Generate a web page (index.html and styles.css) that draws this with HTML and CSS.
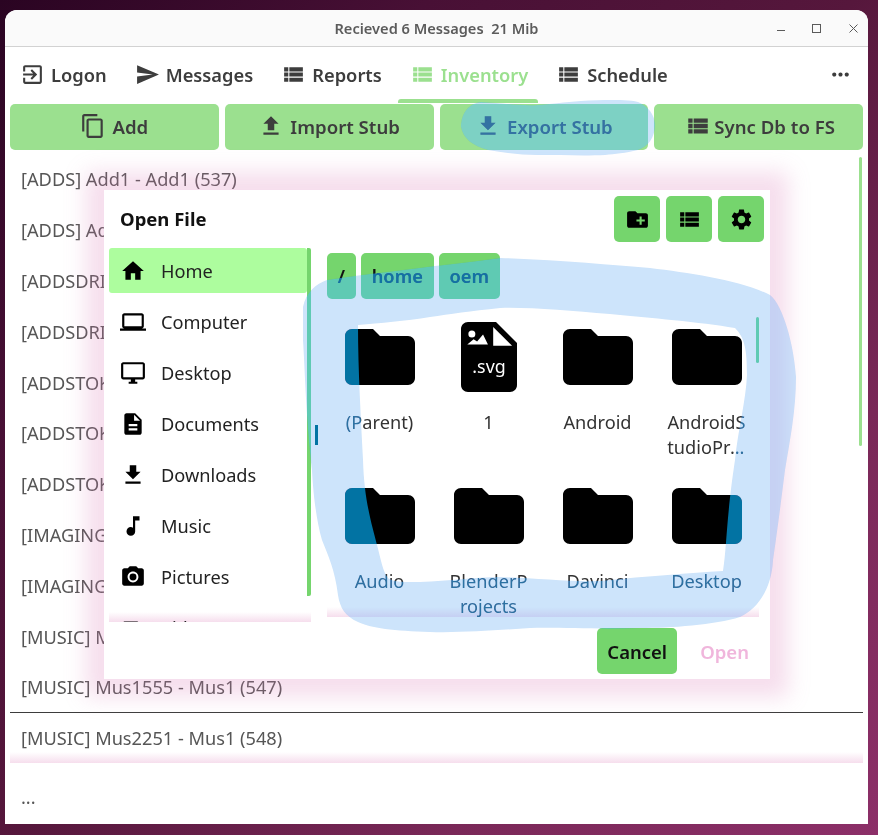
FILE: index.html
```html
<!DOCTYPE html>
<html lang="en">
<head>
    <meta charset="UTF-8">
    <meta name="viewport" content="width=device-width, initial-scale=1.0">
    <title>Recieved 6 Messages 21 Mib</title>
    <link rel="stylesheet" href="styles.css">
</head>
<body>

    <!-- icons used more than once -->
    <svg class="sprite" xmlns="http://www.w3.org/2000/svg">
        <symbol id="i-logon" viewBox="0 0 24 24"><path d="M10.09 15.59L11.5 17l5-5-5-5-1.41 1.41L12.67 11H3v2h9.67l-2.58 2.59zM19 3H5c-1.11 0-2 .9-2 2v4h2V5h14v14H5v-4H3v4c0 1.1.89 2 2 2h14c1.1 0 2-.9 2-2V5c0-1.1-.9-2-2-2z"/></symbol>
        <symbol id="i-send" viewBox="0 0 24 24"><path d="M2.01 21L23 12 2.01 3 2 10l15 2-15 2z"/></symbol>
        <symbol id="i-list" viewBox="0 0 24 24"><path d="M3 14h4v-4H3v4zm0 5h4v-4H3v4zM3 9h4V5H3v4zm5 5h13v-4H8v4zm0 5h13v-4H8v4zM8 5v4h13V5H8z"/></symbol>
        <symbol id="i-more" viewBox="0 0 24 24"><path d="M6 10c-1.1 0-2 .9-2 2s.9 2 2 2 2-.9 2-2-.9-2-2-2zm12 0c-1.1 0-2 .9-2 2s.9 2 2 2 2-.9 2-2-.9-2-2-2zm-6 0c-1.1 0-2 .9-2 2s.9 2 2 2 2-.9 2-2-.9-2-2-2z"/></symbol>
        <symbol id="i-copy" viewBox="0 0 24 24"><path d="M16 1H4c-1.1 0-2 .9-2 2v14h2V3h12V1zm3 4H8c-1.1 0-2 .9-2 2v14c0 1.1.9 2 2 2h11c1.1 0 2-.9 2-2V7c0-1.1-.9-2-2-2zm0 16H8V7h11v14z"/></symbol>
        <symbol id="i-upload" viewBox="0 0 24 24"><path d="M9 16h6v-6h4l-7-7-7 7h4zm-4 2h14v2H5z"/></symbol>
        <symbol id="i-download" viewBox="0 0 24 24"><path d="M19 9h-4V3H9v6H5l7 7 7-7zM5 18v2h14v-2H5z"/></symbol>
        <symbol id="i-folder" viewBox="0 0 24 24"><path d="M10 4H4c-1.1 0-2 .9-2 2v12c0 1.1.9 2 2 2h16c1.1 0 2-.9 2-2V8c0-1.1-.9-2-2-2h-8l-2-2z"/></symbol>
        <symbol id="i-scribble" viewBox="0 0 878 835">
            <path fill-rule="evenodd" d="M303 307C306 292 316 284 327 280C380 272 440 266 500 258C560 260 610 265 650 268C690 273 740 280 770 295C783 305 794 345 796 377C796 410 790 440 785 470C780 510 776 540 773 560C772 585 760 608 740 617C715 625 670 628 640 628C600 630 560 627 530 628C500 630 460 633 430 632C395 631 370 628 358 622C345 616 340 608 338 595C335 570 328 555 322 540C316 520 313 490 312 470C306 420 305 370 303 340ZM358 325C358 370 361 420 363 460C364 500 372 525 377 545C381 560 383 572 388 578C393 582 400 582 420 582C450 581 475 577 500 577C530 578 570 582 600 581C650 576 690 573 723 571C727 545 726 520 735 460C738 430 746 400 747 375C747 350 745 338 735 328C700 322 650 318 610 314C570 311 530 307 500 308C470 311 450 314 430 317C405 321 380 323 358 325Z"/>
            <path d="M461 127C461 112 470 103 481 102C500 103 520 106 538 105C560 103 585 100 605 100C620 100 630 100 638 102C648 106 655 115 655 125C655 137 648 147 638 150C625 153 615 154 605 155C585 156 560 155 538 155C520 155 505 153 488 150C472 146 463 138 461 127Z"/>
        </symbol>
    </svg>

    <div class="window">
        <div class="titlebar">
            <span class="title-text">Recieved 6 Messages&nbsp; 21 Mib</span>
            <div class="win-controls">
                <svg viewBox="0 0 12 12"><path d="M1 7.5h8" /></svg>
                <svg viewBox="0 0 12 12"><rect x="0.5" y="1.5" width="8" height="8" /></svg>
                <svg viewBox="0 0 12 12"><path d="M1.5 1.5l8 8M9.5 1.5l-8 8" /></svg>
            </div>
        </div>

        <nav class="tabs">
            <a class="tab"><svg class="icon"><use href="#i-logon"/></svg>Logon</a>
            <a class="tab"><svg class="icon"><use href="#i-send"/></svg>Messages</a>
            <a class="tab"><svg class="icon"><use href="#i-list"/></svg>Reports</a>
            <a class="tab tab-active"><svg class="icon"><use href="#i-list"/></svg>Inventory</a>
            <a class="tab"><svg class="icon"><use href="#i-list"/></svg>Schedule</a>
            <svg class="icon tab-more"><use href="#i-more"/></svg>
        </nav>

        <div class="actions">
            <button class="action"><svg class="icon"><use href="#i-copy"/></svg>Add</button>
            <button class="action"><svg class="icon"><use href="#i-upload"/></svg>Import Stub</button>
            <button class="action"><svg class="icon"><use href="#i-download"/></svg>Export Stub</button>
            <button class="action action-sync"><svg class="icon"><use href="#i-list"/></svg>Sync Db to FS</button>
        </div>

        <div class="list-wrap">
            <ul class="stub-list">
                <li>[ADDS] Add1 - Add1 (537)</li>
                <li>[ADDS] Add</li>
                <li>[ADDSDRI</li>
                <li>[ADDSDRI</li>
                <li>[ADDSTOK</li>
                <li>[ADDSTOK</li>
                <li>[ADDSTOK</li>
                <li>[IMAGING</li>
                <li>[IMAGING</li>
                <li>[MUSIC] M</li>
                <li class="row-sep">[MUSIC] Mus1555 - Mus1 (547)</li>
                <li>[MUSIC] Mus2251 - Mus1 (548)</li>
            </ul>
            <div class="list-scroll"></div>
        </div>
        <div class="list-more">...</div>

        <div class="dialog">
            <div class="dialog-head">
                <span class="dialog-title">Open File</span>
                <button class="icon-btn">
                    <svg class="icon" viewBox="0 0 24 24"><path d="M20 6h-8l-2-2H4c-1.11 0-1.99.89-1.99 2L2 18c0 1.11.89 2 2 2h16c1.11 0 2-.89 2-2V8c0-1.11-.89-2-2-2zm-1 8h-3v3h-2v-3h-3v-2h3V9h2v3h3v2z"/></svg>
                </button>
                <button class="icon-btn"><svg class="icon"><use href="#i-list"/></svg></button>
                <button class="icon-btn">
                    <svg class="icon" viewBox="0 0 24 24"><path d="M19.14 12.94c.04-.3.06-.61.06-.94 0-.32-.02-.64-.07-.94l2.03-1.58c.18-.14.23-.41.12-.61l-1.92-3.32c-.12-.22-.37-.29-.59-.22l-2.39.96c-.5-.38-1.03-.7-1.62-.94l-.36-2.54c-.04-.24-.24-.41-.48-.41h-3.84c-.24 0-.43.17-.47.41l-.36 2.54c-.59.24-1.13.57-1.62.94l-2.39-.96c-.22-.08-.47 0-.59.22L2.74 8.87c-.12.21-.08.47.12.61l2.03 1.58c-.05.3-.09.63-.09.94s.02.64.07.94l-2.03 1.58c-.18.14-.23.41-.12.61l1.92 3.32c.12.22.37.29.59.22l2.39-.96c.5.38 1.03.7 1.62.94l.36 2.54c.05.24.24.41.48.41h3.84c.24 0 .44-.17.47-.41l.36-2.54c.59-.24 1.13-.56 1.62-.94l2.39.96c.22.08.47 0 .59-.22l1.92-3.32c.12-.22.07-.47-.12-.61l-2.01-1.58zM12 15.6c-1.98 0-3.6-1.62-3.6-3.6s1.62-3.6 3.6-3.6 3.6 1.62 3.6 3.6-1.62 3.6-3.6 3.6z"/></svg>
                </button>
            </div>

            <div class="dialog-body">
                <div class="places">
                    <ul class="place-list">
                        <li class="place place-active">
                            <svg class="icon" viewBox="0 0 24 24"><path d="M10 20v-6h4v6h5v-8h3L12 3 2 12h3v8z"/></svg>Home
                        </li>
                        <li class="place">
                            <svg class="icon" viewBox="0 0 24 24"><path d="M20 18c1.1 0 1.99-.9 1.99-2L22 6c0-1.1-.9-2-2-2H4c-1.1 0-2 .9-2 2v10c0 1.1.9 2 2 2H0v2h24v-2h-4zM4 6h16v10H4V6z"/></svg>Computer
                        </li>
                        <li class="place">
                            <svg class="icon" viewBox="0 0 24 24"><path d="M21 2H3c-1.1 0-2 .9-2 2v12c0 1.1.9 2 2 2h7v2H8v2h8v-2h-2v-2h7c1.1 0 2-.9 2-2V4c0-1.1-.9-2-2-2zm0 14H3V4h18v12z"/></svg>Desktop
                        </li>
                        <li class="place">
                            <svg class="icon" viewBox="0 0 24 24"><path d="M14 2H6c-1.1 0-1.99.9-1.99 2L4 20c0 1.1.89 2 1.99 2H18c1.1 0 2-.9 2-2V8l-6-6zm2 16H8v-2h8v2zm0-4H8v-2h8v2zm-3-5V3.5L18.5 9H13z"/></svg>Documents
                        </li>
                        <li class="place"><svg class="icon"><use href="#i-download"/></svg>Downloads</li>
                        <li class="place">
                            <svg class="icon" viewBox="0 0 24 24"><path d="M12 3v10.55c-.59-.34-1.27-.55-2-.55-2.21 0-4 1.79-4 4s1.79 4 4 4 4-1.79 4-4V7h4V3h-6z"/></svg>Music
                        </li>
                        <li class="place">
                            <svg class="icon" viewBox="0 0 24 24"><circle cx="12" cy="12" r="3.2"/><path d="M9 2L7.17 4H4c-1.1 0-2 .9-2 2v12c0 1.1.9 2 2 2h16c1.1 0 2-.9 2-2V6c0-1.1-.9-2-2-2h-3.17L15 2H9zm3 15c-2.76 0-5-2.24-5-5s2.24-5 5-5 5 2.24 5 5-2.24 5-5 5z"/></svg>Pictures
                        </li>
                        <li class="place">
                            <svg class="icon" viewBox="0 0 24 24"><path d="M17 10.5V7c0-.55-.45-1-1-1H4c-.55 0-1 .45-1 1v10c0 .55.45 1 1 1h12c.55 0 1-.45 1-1v-3.5l4 4v-11l-4 4z"/></svg>Videos
                        </li>
                    </ul>
                    <div class="places-scroll"></div>
                </div>

                <div class="divider"><span></span></div>

                <div class="browser">
                    <div class="crumbs">
                        <button class="crumb">/</button>
                        <button class="crumb">home</button>
                        <button class="crumb">oem</button>
                    </div>
                    <div class="files">
                        <div class="file"><svg class="file-icon"><use href="#i-folder"/></svg><span class="file-name">(Parent)</span></div>
                        <div class="file">
                            <svg class="file-icon" viewBox="0 0 24 24">
                                <path d="M14 2H6c-1.1 0-2 .9-2 2v16c0 1.1.9 2 2 2h12c1.1 0 2-.9 2-2V8l-6-6z"/>
                                <path class="svg-white" d="M13.2 3.4L18.6 8.8H13.2z"/>
                                <circle class="svg-white" cx="7.1" cy="5.4" r="1"/>
                                <path class="svg-white" d="M5.8 8.4L7.6 6.9 8.6 7.6 10.3 5.6 11.7 8.4z"/>
                                <text class="svg-label" x="12" y="16.5" text-anchor="middle">.svg</text>
                            </svg>
                            <span class="file-name">1</span>
                        </div>
                        <div class="file"><svg class="file-icon"><use href="#i-folder"/></svg><span class="file-name">Android</span></div>
                        <div class="file"><svg class="file-icon"><use href="#i-folder"/></svg><span class="file-name">AndroidStudioProjects</span></div>
                        <div class="file"><svg class="file-icon"><use href="#i-folder"/></svg><span class="file-name">Audio</span></div>
                        <div class="file"><svg class="file-icon"><use href="#i-folder"/></svg><span class="file-name">BlenderProjects</span></div>
                        <div class="file"><svg class="file-icon"><use href="#i-folder"/></svg><span class="file-name">Davinci</span></div>
                        <div class="file"><svg class="file-icon"><use href="#i-folder"/></svg><span class="file-name">Desktop</span></div>
                    </div>
                    <div class="files-scroll"></div>
                </div>
            </div>

            <div class="dialog-foot">
                <button class="btn-cancel">Cancel</button>
                <button class="btn-open">Open</button>
            </div>
        </div>
    </div>

    <!-- highlighter marks drawn on top of the screenshot -->
    <svg class="marker marker-burn" viewBox="0 0 878 835"><use href="#i-scribble"/></svg>
    <svg class="marker marker-dark" viewBox="0 0 878 835"><use href="#i-scribble"/></svg>
    <svg class="marker marker-light" viewBox="0 0 878 835"><use href="#i-scribble"/></svg>

</body>
</html>
```

FILE: styles.css
```css
html, body {
    height: 100%;
}

body {
    position: relative;
    box-sizing: border-box;
    height: 835px;
    margin: 0;
    padding: 10px 10px 11px 5px;
    overflow: hidden;
    font-family: "Noto Sans", sans-serif;
    background: linear-gradient(135deg, #2a0422 0%, #481035 25%, #56173c 50%, #7a2858 75%, #8c2f68 100%);
}

.sprite {
    display: none;
}

.icon {
    flex: none;
    width: 25px;
    height: 25px;
    fill: currentColor;
}

button {
    font-family: inherit;
    border: none;
    cursor: pointer;
}

/* window */
.window {
    position: relative;
    display: flex;
    flex-direction: column;
    height: 100%;
    background-color: #fff;
    border-radius: 12px 12px 0 0;
    overflow: hidden;
}

.titlebar {
    position: relative;
    display: flex;
    flex: none;
    align-items: center;
    justify-content: center;
    height: 36px;
    background-color: #fafafa;
    border-bottom: 1px solid #d2d2d2;
}

.title-text {
    font-size: 14.6px;
    font-weight: 600;
    color: #5c5c5c;
}

.win-controls {
    position: absolute;
    top: 13px;
    right: 8px;
    display: flex;
    gap: 24px;
}

.win-controls svg {
    width: 12px;
    height: 12px;
    fill: none;
    stroke: #5a5a5a;
    stroke-width: 1;
}

/* tabs */
.tabs {
    display: flex;
    flex: none;
    align-items: stretch;
    gap: 6px;
    height: 57px;
    padding-left: 3px;
    color: #3d3d3d;
}

.tab {
    position: relative;
    display: flex;
    align-items: center;
    gap: 6px;
    height: 54px;
    padding: 0 10px 2px 12px;
    font-size: 18.3px;
    font-weight: 600;
}

.tab-active {
    color: #9be08f;
}

.tab-active::after {
    content: "";
    position: absolute;
    left: 0;
    right: 0;
    bottom: 0;
    height: 4px;
    background-color: #9be08f;
    border-radius: 3px 3px 0 0;
}

.tab-more {
    margin: 0 15px 3px auto;
    align-self: center;
}

/* action buttons */
.actions {
    display: flex;
    flex: none;
    gap: 6px;
    padding: 0 5px;
}

.action {
    display: flex;
    flex: 1 1 200px;
    align-items: center;
    justify-content: center;
    gap: 6px;
    box-sizing: border-box;
    height: 46px;
    padding: 0 0 2px;
    font-size: 18.6px;
    font-weight: 600;
    color: #3d3d3d;
    background-color: #9be08f;
    border-radius: 5px;
}

.action .icon {
    width: 26px;
    height: 26px;
}

.action-sync {
    gap: 3px;
    padding-left: 3px;
}

/* stub list */
.list-wrap {
    position: relative;
    flex: none;
    height: 613px;
    margin: 0 5px;
    overflow: hidden;
}

.list-wrap::after {
    content: "";
    position: absolute;
    left: 0;
    right: 0;
    bottom: 0;
    height: 11px;
    background: linear-gradient(rgba(246, 222, 237, 0), #f6deed);
}

.stub-list {
    margin: 0;
    padding: 3.6px 0 0;
    list-style: none;
}

.stub-list li {
    display: flex;
    align-items: center;
    box-sizing: border-box;
    height: 50.9px;
    padding-left: 11px;
    font-size: 18.2px;
    color: #565656;
}

.stub-list .row-sep {
    border-bottom: 1.5px solid #3d3d3d;
}

.stub-list .row-sep + li {
    height: 49px;
}

.list-scroll {
    position: absolute;
    top: 7px;
    right: 1px;
    width: 3px;
    height: 289px;
    background-color: #9be08f;
    border-radius: 2px;
}

.list-more {
    padding: 22px 0 0 16px;
    font-size: 18.2px;
    color: #565656;
}

/* open file dialog */
.dialog {
    position: absolute;
    top: 180px;
    left: 99px;
    display: flex;
    flex-direction: column;
    box-sizing: border-box;
    width: 666px;
    height: 489px;
    padding: 6px 6px 0 5px;
    background-color: #fff;
    box-shadow: 0 0 20px 18px rgba(219, 123, 183, 0.25);
}

.dialog-head {
    display: flex;
    flex: none;
    align-items: center;
    gap: 6px;
    height: 46px;
}

.dialog-title {
    margin: 0 auto 2px 11px;
    font-size: 18.5px;
    font-weight: 700;
    color: #111;
}

.icon-btn {
    display: flex;
    align-items: center;
    justify-content: center;
    width: 46px;
    height: 46px;
    padding: 0;
    color: #000;
    background-color: #75d56d;
    border-radius: 5px;
}

.dialog-body {
    display: flex;
    flex: none;
    align-items: flex-start;
    height: 374px;
    margin-top: 6px;
}

.places {
    position: relative;
    display: flex;
    flex: none;
    width: 202px;
    height: 374px;
    overflow: hidden;
}

.places::before {
    content: "";
    position: absolute;
    left: 0;
    right: 0;
    bottom: 0;
    height: 10px;
    background: linear-gradient(rgba(246, 222, 237, 0), #f6deed);
}

.place-list {
    position: relative;
    flex: none;
    width: 198px;
    margin: 0;
    padding: 0;
    list-style: none;
}

.place {
    display: flex;
    align-items: center;
    gap: 15px;
    height: 45px;
    margin-bottom: 6px;
    padding-left: 11px;
    font-size: 18.2px;
    color: #222;
    border-radius: 3px;
}

.place .icon {
    width: 26px;
    height: 26px;
    color: #000;
}

.place-active {
    background-color: #adfd9e;
}

.places-scroll {
    flex: none;
    width: 4px;
    height: 348px;
    background-color: #75d56d;
    border-radius: 0 2px 2px 0;
}

.divider {
    display: flex;
    flex: none;
    align-items: center;
    box-sizing: border-box;
    width: 16px;
    height: 374px;
    padding-left: 4px;
}

.divider span {
    width: 3px;
    height: 20px;
    background-color: #000;
}

.browser {
    position: relative;
    flex: none;
    width: 432px;
    height: 369px;
    overflow: hidden;
}

.browser::before {
    content: "";
    position: absolute;
    left: 0;
    right: 0;
    bottom: 0;
    height: 10px;
    background: linear-gradient(rgba(246, 222, 237, 0), #f6deed);
}

.crumbs {
    position: relative;
    display: flex;
    gap: 5px;
    padding-top: 5px;
}

.crumb {
    height: 46px;
    padding: 0 10.8px 2px;
    font-size: 18.3px;
    font-weight: 600;
    color: #111;
    background-color: #75d56d;
    border-radius: 5px;
}

.files {
    position: relative;
    display: grid;
    grid-template-columns: repeat(4, 105px);
    column-gap: 4px;
    row-gap: 15px;
    padding-top: 16px;
}

.file {
    display: flex;
    flex-direction: column;
    align-items: center;
    gap: 11px;
    height: 144px;
}

.file-icon {
    flex: none;
    width: 84px;
    height: 84px;
    fill: #000;
}

.file-icon .svg-white {
    fill: #fff;
}

.svg-label {
    font-size: 5.1px;
    fill: #fff;
}

.file-name {
    display: -webkit-box;
    width: 80px;
    overflow: hidden;
    font-size: 18.2px;
    line-height: 25px;
    color: #333;
    text-align: center;
    word-break: break-all;
    -webkit-box-orient: vertical;
    -webkit-line-clamp: 2;
}

.files-scroll {
    position: absolute;
    top: 69px;
    right: 0;
    width: 3px;
    height: 46px;
    background-color: #75d56d;
    border-radius: 2px;
}

.dialog-foot {
    display: flex;
    align-items: center;
    justify-content: flex-end;
    height: 46px;
    margin-top: 6px;
    padding-right: 15px;
}

.btn-cancel {
    width: 80px;
    height: 46px;
    padding: 0;
    font-size: 18.5px;
    font-weight: 600;
    color: #111;
    background-color: #75d56d;
    border-radius: 5px;
}

.btn-open {
    margin-left: 23px;
    padding: 0;
    font-size: 18.5px;
    font-weight: 600;
    color: #f0b6dc;
    background: none;
}

/* highlighter: burn deepens the mid tones, multiply darkens, plus-lighter brings black up to blue */
.marker {
    position: absolute;
    top: 0;
    left: 0;
    width: 878px;
    height: 835px;
    pointer-events: none;
}

.marker-burn {
    mix-blend-mode: color-burn;
    fill: rgb(255, 178, 178);
}

.marker-dark {
    mix-blend-mode: multiply;
    fill: rgb(203, 113, 88);
}

.marker-light {
    mix-blend-mode: plus-lighter;
    fill: rgb(2, 115, 163);
}
```
